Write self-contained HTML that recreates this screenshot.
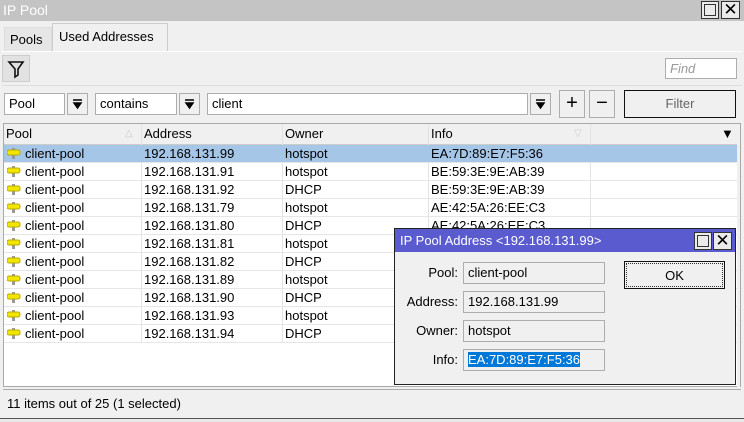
<!DOCTYPE html><html><head><style>
*{box-sizing:border-box;margin:0;padding:0}
body{width:744px;height:422px;background:#f0f0f0;font-family:"Liberation Sans",sans-serif;font-size:13px;color:#000;position:relative;overflow:hidden}
.a{position:absolute}
.inp{position:absolute;background:#fff;border:1px solid #adadad;padding:2px 4px;line-height:15px}
.dd{position:absolute;background:#f0f0f0;border:1px solid #adadad;text-align:center;font-size:11px;line-height:18px}
.row{position:absolute;left:4px;width:733px;height:18px;border-bottom:1px solid #e6e6e6;line-height:17px}
.row span{position:absolute;top:0}
.pin{position:absolute;left:3px;top:3px;width:14px;height:11px}
.vl{position:absolute;top:124px;width:1px;height:219px;background:#e3e3e3}
.lbl{position:absolute;width:60px;text-align:right;left:398px}
.fld{position:absolute;left:463px;width:142px;height:22px;border:1px solid #adadad;background:#f0f0f0;padding:2px 4px;line-height:16px}
</style></head><body>
<div class="a" style="left:0;top:0;width:744px;height:21px;background:#c4c4c4;color:#fff;font-size:14px;padding:2px 3px">IP Pool</div>
<div class="a" style="left:701px;top:1px;width:18px;height:18px;border:1px solid #333;background:#ebebeb"><div class="a" style="left:2px;top:2px;width:12px;height:12px;border:1px solid #333"></div></div>
<div class="a" style="left:721px;top:1px;width:19px;height:18px;border:1px solid #333;background:#ebebeb;font-size:17px;line-height:15px;text-align:center">✕</div>
<div class="a" style="left:4px;top:27px;width:48px;height:25px;background:#e6e6e6;border:1px solid #ddd;padding:4px 5px;font-size:13px">Pools</div>
<div class="a" style="left:52px;top:23px;width:116px;height:29px;background:#f0f0f0;border:1px solid #ccc;border-bottom:none;padding:5px 6px">Used Addresses</div>
<div class="a" style="left:2px;top:51px;width:740px;height:1px;background:#fff"></div>
<div class="a" style="left:2px;top:55px;width:28px;height:27px;background:#e2e2e2;border:1px solid #ccc"><svg width="28" height="27"><path d="M6 6h14l-5 7v6l-3 2v-8z" fill="none" stroke="#111" stroke-width="1.6"/></svg></div>
<div class="a" style="left:2px;top:85px;width:740px;height:1px;background:#ddd"></div>
<div class="inp" style="left:665px;top:58px;width:72px;height:21px;color:#999;font-style:italic">Find</div>
<div class="inp" style="left:4px;top:93px;width:61px;height:22px">Pool</div>
<div class="dd" style="left:67px;top:93px;width:21px;height:22px"><svg width="19" height="20"><path d="M5 6h9M6 9h7l-3.5 5z" stroke="#000" stroke-width="1.5" fill="#000"/></svg></div>
<div class="inp" style="left:95px;top:93px;width:82px;height:22px">contains</div>
<div class="dd" style="left:179px;top:93px;width:21px;height:22px"><svg width="19" height="20"><path d="M5 6h9M6 9h7l-3.5 5z" stroke="#000" stroke-width="1.5" fill="#000"/></svg></div>
<div class="inp" style="left:207px;top:93px;width:321px;height:22px">client</div>
<div class="dd" style="left:530px;top:93px;width:21px;height:22px"><svg width="19" height="20"><path d="M5 6h9M6 9h7l-3.5 5z" stroke="#000" stroke-width="1.5" fill="#000"/></svg></div>
<div class="dd" style="left:559px;top:90px;width:26px;height:28px;font-size:20px;line-height:25px">+</div>
<div class="dd" style="left:589px;top:90px;width:26px;height:28px;font-size:20px;line-height:25px">−</div>
<div class="a" style="left:624px;top:90px;width:112px;height:28px;border:1px solid #111;text-align:center;line-height:26px;color:#666">Filter</div>
<div class="a" style="left:3px;top:123px;width:738px;height:264px;background:#fff;border:1px solid #aaa"></div>
<div class="a" style="left:4px;top:124px;width:733px;height:21px;background:#f0f0f0;border-bottom:1px solid #ccc;line-height:20px">
<span class="a" style="left:2px">Pool</span><span class="a" style="left:121px;color:#ccc;font-size:10px">△</span><span class="a" style="left:140px">Address</span><span class="a" style="left:281px">Owner</span><span class="a" style="left:427px">Info</span><span class="a" style="left:570px;color:#ccc;font-size:10px">▽</span><span class="a" style="left:717px;font-size:13px">▼</span></div>
<div class="a" style="left:737px;top:124px;width:3px;height:263px;background:#f0f0f0"></div>
<div class="vl" style="left:141px"></div><div class="vl" style="left:282px"></div><div class="vl" style="left:428px"></div><div class="vl" style="left:590px"></div>
<div id="rows"></div>
<div class="a" style="left:3px;top:389px;width:738px;height:1px;background:#aaa"></div>
<div class="a" style="left:7px;top:396px">11 items out of 25 (1 selected)</div>
<div class="a" style="left:0;top:418px;width:744px;height:4px;background:#e8e8e8;border-top:1px solid #555"></div>
<div class="a" style="left:394px;top:228px;width:342px;height:157px;background:#f0f0f0;border:1px solid #222"></div>
<div class="a" style="left:395px;top:229px;width:340px;height:23px;background:#5b5bd0;color:#fff;padding:4px 5px">IP Pool Address &lt;192.168.131.99&gt;</div>
<div class="a" style="left:694px;top:232px;width:18px;height:18px;border:1px solid #333;background:#ebebeb"><div class="a" style="left:2px;top:2px;width:12px;height:12px;border:1px solid #333"></div></div>
<div class="a" style="left:713px;top:232px;width:19px;height:18px;border:1px solid #333;background:#ebebeb;font-size:17px;line-height:15px;text-align:center">✕</div>
<div class="lbl" style="top:265px">Pool:</div><div class="fld" style="top:262px">client-pool</div>
<div class="lbl" style="top:294px">Address:</div><div class="fld" style="top:291px">192.168.131.99</div>
<div class="lbl" style="top:323px">Owner:</div><div class="fld" style="top:320px">hotspot</div>
<div class="lbl" style="top:352px">Info:</div><div class="fld" style="top:349px"><span style="background:#0078d7;color:#fff">EA:7D:89:E7:F5:36</span></div>
<div class="a" style="left:624px;top:261px;width:101px;height:28px;border:1px solid #111;text-align:center;line-height:24px"><div style="border:1px dotted #333;margin:1px;height:24px">OK</div></div>
<script>
var d=[["99","hotspot","EA:7D:89:E7:F5:36"],["91","hotspot","BE:59:3E:9E:AB:39"],["92","DHCP","BE:59:3E:9E:AB:39"],["79","hotspot","AE:42:5A:26:EE:C3"],["80","DHCP","AE:42:5A:26:EE:C3"],["81","hotspot",""],["82","DHCP",""],["89","hotspot",""],["90","DHCP",""],["93","hotspot",""],["94","DHCP",""]];
var h="";d.forEach(function(r,i){h+='<div class="row" style="top:'+(145+i*18)+'px;'+(i==0?'background:#a6c6e8':'')+'"><svg class="pin" viewBox="0 0 14 11"><rect x="5" y="0" width="3" height="11" fill="#999"/><rect x="0" y="2" width="13" height="5" rx="2" fill="#f2e600" stroke="#b8a800"/></svg><span style="left:21px">client-pool</span><span style="left:140px">192.168.131.'+r[0]+'</span><span style="left:281px">'+r[1]+'</span><span style="left:427px">'+r[2]+'</span></div>'});
document.getElementById("rows").innerHTML=h;
</script>
</body></html>
